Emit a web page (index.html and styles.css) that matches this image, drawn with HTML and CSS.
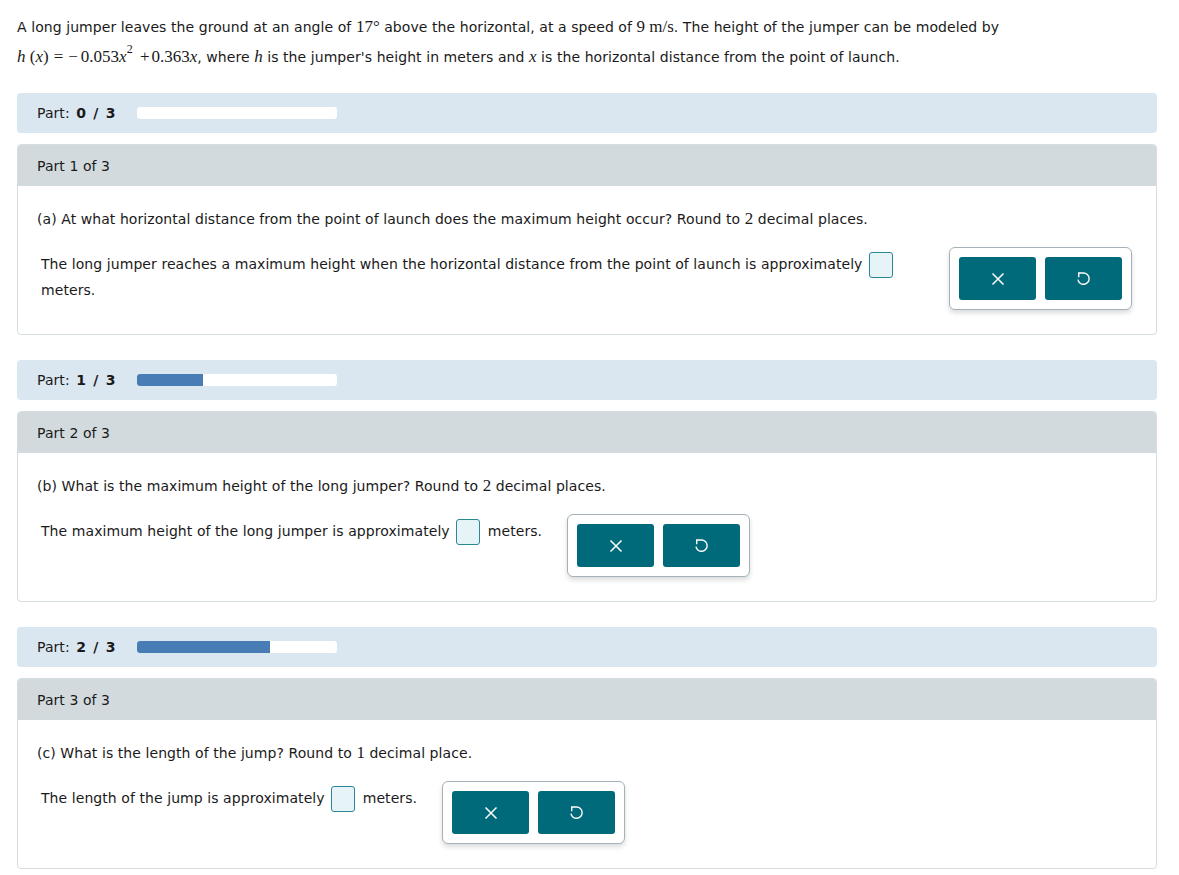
FILE: index.html
```html
<!DOCTYPE html>
<html>
<head>
<title>Long jumper</title>
<meta name="viewport" content="width=device-width, initial-scale=1.0">
<link rel="stylesheet" href="styles.css">
</head>
<body>

<div class="page">

<p class="intro">
  A long jumper leaves the ground at an angle of <span class="m">17°</span> above the horizontal, at a speed of <span class="m">9 m/s</span>. The height of the jumper can be modeled by<br>
  <span class="m"><i>h</i> (<i>x</i>)<span class="op">=</span><span class="neg">−</span>0.053<i>x</i><sup>2</sup> <span class="plus">+</span>0.363<i>x</i></span>, where <span class="m"><i>h</i></span> is the jumper's height in meters and <span class="m"><i>x</i></span> is the horizontal distance from the point of launch.
</p>

<!-- Part 1 -->
<div class="progress">
  <span>Part: <b>0 / 3</b></span>
  <div class="bar"><div class="fill" style="width: 0px"></div></div>
</div>

<div class="card">
  <div class="card-head">Part 1 of 3</div>
  <div class="card-body">
    <p class="question">(a) At what horizontal distance from the point of launch does the maximum height occur? Round to <span class="m">2</span> decimal places.</p>
    <div class="answer-row">
      <div class="answer">The long jumper reaches a maximum height when the horizontal distance from the point of launch is approximately <span class="box"></span> meters.</div>
      <div class="tools">
        <button class="tool"><svg width="14" height="14" viewBox="0 0 14 14"><path d="M1.5 1.5 L12.5 12.5 M12.5 1.5 L1.5 12.5" stroke="#fff" stroke-width="1.5" fill="none"/></svg></button>
        <button class="tool"><svg width="13" height="15" viewBox="-1 -0.5 15 16"><path d="M1 6 V1.2 H6.5 A6.5 6.5 0 1 1 0.1 8.8" stroke="#fff" stroke-width="1.6" fill="none"/></svg></button>
      </div>
    </div>
  </div>
</div>

<!-- Part 2 -->
<div class="progress">
  <span>Part: <b>1 / 3</b></span>
  <div class="bar"><div class="fill" style="width: 66px"></div></div>
</div>

<div class="card">
  <div class="card-head">Part 2 of 3</div>
  <div class="card-body">
    <p class="question">(b) What is the maximum height of the long jumper? Round to <span class="m">2</span> decimal places.</p>
    <div class="answer-row">
      <div class="answer">The maximum height of the long jumper is approximately <span class="box"></span> meters.</div>
      <div class="tools">
        <button class="tool"><svg width="14" height="14" viewBox="0 0 14 14"><path d="M1.5 1.5 L12.5 12.5 M12.5 1.5 L1.5 12.5" stroke="#fff" stroke-width="1.5" fill="none"/></svg></button>
        <button class="tool"><svg width="13" height="15" viewBox="-1 -0.5 15 16"><path d="M1 6 V1.2 H6.5 A6.5 6.5 0 1 1 0.1 8.8" stroke="#fff" stroke-width="1.6" fill="none"/></svg></button>
      </div>
    </div>
  </div>
</div>

<!-- Part 3 -->
<div class="progress">
  <span>Part: <b>2 / 3</b></span>
  <div class="bar"><div class="fill" style="width: 133px"></div></div>
</div>

<div class="card">
  <div class="card-head">Part 3 of 3</div>
  <div class="card-body">
    <p class="question">(c) What is the length of the jump? Round to <span class="m">1</span> decimal place.</p>
    <div class="answer-row">
      <div class="answer">The length of the jump is approximately <span class="box"></span> meters.</div>
      <div class="tools">
        <button class="tool"><svg width="14" height="14" viewBox="0 0 14 14"><path d="M1.5 1.5 L12.5 12.5 M12.5 1.5 L1.5 12.5" stroke="#fff" stroke-width="1.5" fill="none"/></svg></button>
        <button class="tool"><svg width="13" height="15" viewBox="-1 -0.5 15 16"><path d="M1 6 V1.2 H6.5 A6.5 6.5 0 1 1 0.1 8.8" stroke="#fff" stroke-width="1.6" fill="none"/></svg></button>
      </div>
    </div>
  </div>
</div>

</div>

</body>
</html>
```

FILE: styles.css
```css
body {
  margin: 0;
  font-family: "DejaVu Sans", Verdana, sans-serif;
  font-size: 14px;
  letter-spacing: 0.07px;
  color: #1a1a1a;
  background: #fff;
}
.page {
  width: 1140px;
  padding: 12px 0 0 17px;
}
.intro {
  margin: 0 0 21px;
  line-height: 30px;
}
.m {
  font-family: "Liberation Serif", "Times New Roman", serif;
  font-size: 17px;
  letter-spacing: 0;
}
.m sup {
  font-size: 12px;
  vertical-align: 9px;
  line-height: 0;
  margin-right: 3px;
}
.op {
  margin: 0 5px;
}
.neg {
  margin-right: 3px;
}
.plus {
  margin-right: 2px;
}

/* progress strip */
.progress {
  height: 40px;
  display: flex;
  align-items: center;
  gap: 20px;
  padding: 0 20px;
  background: #dae6f0;
  border-radius: 4px;
  margin-bottom: 11px;
}
.progress b {
  margin-left: 2px;
  letter-spacing: 1.2px;
}
.bar {
  width: 200px;
  height: 12px;
  background: #fff;
  border-radius: 3px;
  overflow: hidden;
}
.fill {
  height: 100%;
  background: #477cb5;
}

/* part card */
.card {
  border: 1px solid #d6dde0;
  border-radius: 4px;
  margin-bottom: 25px;
  overflow: hidden;
}
.card-head {
  height: 41px;
  line-height: 42px;
  padding-left: 19px;
  background: #d2dadd;
}
.card-body {
  padding: 24px 24px 24px 19px;
}
.question {
  margin: 0 0 19px;
  line-height: 18px;
}
.answer-row {
  display: flex;
  align-items: flex-start;
  gap: 25px;
}
.answer {
  padding: 5px 0 0 4px;
  line-height: 25px;
}
.box {
  display: inline-block;
  width: 22px;
  height: 24px;
  border: 1px solid #2a8797;
  border-radius: 3px;
  background: #e6f4f8;
  vertical-align: middle;
  margin: 0 3px 0 2px;
}
.tools {
  flex: none;
  display: flex;
  gap: 9px;
  padding: 9px;
  border: 1px solid #a3b2ba;
  border-radius: 6px;
  background: #fff;
  box-shadow: 0 3px 5px rgba(0, 0, 0, 0.14);
}
.tool {
  width: 77px;
  height: 43px;
  border: none;
  border-radius: 3px;
  background: #016a7a;
  display: flex;
  align-items: center;
  justify-content: center;
  cursor: pointer;
  padding: 0;
}
```
